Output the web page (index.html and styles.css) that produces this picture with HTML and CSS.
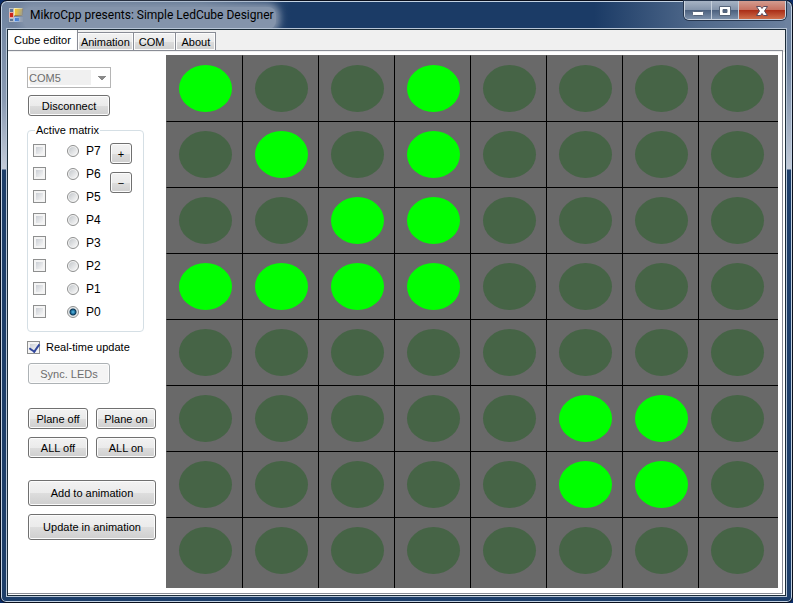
FILE: index.html
```html
<!DOCTYPE html>
<html lang="en">
<head>
<meta charset="utf-8">
<title>MikroCpp presents: Simple LedCube Designer</title>
<link rel="stylesheet" href="styles.css">
</head>
<body>
<div class="window">
  <header class="titlebar">
    <svg class="app-icon" viewBox="0 0 14 14" aria-hidden="true">
      <path fill="#b9bec6" d="M0 0h5v4H0zM0 10h5v4H0zM11 9h3v5h-3z"/>
      <path fill="#5f7390" d="M1 1h3v3H1zM1 11h3v2H1z"/>
      <rect x="5.500" y=".5" width="8" height="7" fill="#f8c62c" stroke="#fff0a8"/>
      <path d="M5.500 7.500h8v-7" fill="none" stroke="#b87a10"/>
      <rect x=".5" y="4.500" width="4" height="5" fill="#cf2418" stroke="#e7b0a8"/>
      <rect x="5.500" y="9.500" width="5" height="4" fill="#397be0" stroke="#a8c8f4"/>
    </svg>
    <h1 class="title">MikroCpp presents: Simple LedCube Designer</h1>
    <div class="caption">
      <button class="cap" type="button" aria-label="Minimize"><svg viewBox="0 0 14 12"><rect x="1.500" y="6.500" width="11" height="4" rx="1" fill="#fff" stroke="#56657a"/></svg></button>
      <button class="cap" type="button" aria-label="Maximize"><svg viewBox="0 0 14 12"><path fill="#fff" fill-rule="evenodd" stroke="#56657a" d="M1.500 1.500h11v9h-11zM5 4.500v3h4v-3z"/></svg></button>
      <button class="cap close" type="button" aria-label="Close"><svg viewBox="0 0 14 12"><path fill="#fff" stroke="#5b4b5c" d="M1.500 1.500h4L7 3.500l1.500-2h4L9.500 6l3 4.500h-4L7 8.500l-1.500 2h-4L4.500 6z"/></svg></button>
    </div>
  </header>
  <main class="client">
    <nav class="tabs">
      <button class="tab active" type="button">Cube editor</button>
      <button class="tab" type="button">Animation</button>
      <button class="tab com" type="button">COM</button>
      <button class="tab" type="button">About</button>
    </nav>
    <div class="page">
      <aside class="side">
        <select class="port" aria-label="Port" disabled><option>COM5</option></select>
        <button class="btn mid" type="button">Disconnect</button>
        <fieldset class="matrix">
          <legend>Active matrix</legend>
          <div class="planes" id="planes"></div>
          <div class="steps">
            <button class="btn step" type="button">+</button>
            <button class="btn step" type="button">−</button>
          </div>
        </fieldset>
        <label class="realtime"><input class="check" type="checkbox" checked>Real-time update</label>
        <button class="btn mid sync" type="button" disabled>Sync. LEDs</button>
        <div class="pairs">
          <button class="btn" type="button">Plane off</button>
          <button class="btn" type="button">Plane on</button>
          <button class="btn" type="button">ALL off</button>
          <button class="btn" type="button">ALL on</button>
        </div>
        <div class="anim">
          <button class="btn tall" type="button">Add to animation</button>
          <button class="btn tall" type="button">Update in animation</button>
        </div>
      </aside>
      <div class="leds" id="leds"></div>
    </div>
  </main>
</div>
<script src="app.js"></script>
</body>
</html>
```
FILE: styles.css
```css
* { box-sizing: border-box; }
body {
  margin: 0;
  background: #0b2c66;
  font: 11px/14px "Liberation Sans", Arial, sans-serif;
  color: #000;
}
button, select, input { font: inherit; color: inherit; margin: 0; }
.window {
  min-height: 100vh;
  display: flex;
  flex-direction: column;
  padding: 0 6px 6px;
  border: 1px solid #0a0f1c;
  border-radius: 7px 7px 6px 6px;
  box-shadow: inset 0 0 0 1px #c3d2e3;
  background:
    linear-gradient(#6d829f, #8a9bb3 100px, #c3cbd8 168px, transparent 169px) left / 7px 100% no-repeat,
    linear-gradient(#6d829f, #6d829f 60px, #c3cbd8 168px, transparent 169px) right / 7px 100% no-repeat,
    linear-gradient(90deg, #7385a0, #5f7592 200px, #1b3b66 290px, #1b3b66 75%, #50698b 88%, #6d829f) top / 100% 29px no-repeat,
    #1d3e69;
}
.titlebar { display: flex; height: 28px; padding-left: 2px; }
.app-icon { flex: none; width: 14px; height: 14px; margin-top: 7px; }
.title {
  margin: 6px auto 0 0;
  padding: 0 2px 0 7px;
  font: 12px/16px Roboto, "Open Sans", sans-serif;
  border-radius: 8px;
  background: #8494ab;
  box-shadow: 0 0 7px 4px #8494ab;
}
.caption {
  display: flex;
  height: 19px;
  border: 1px solid #cdd6e1;
  border-top: 0;
  border-radius: 0 0 5px 5px;
  box-shadow: 0 0 0 1px #26364e;
  overflow: hidden;
}
.cap {
  width: 27px;
  padding: 0;
  border: 0;
  border-right: 1px solid #c5cfdb;
  background: linear-gradient(#a6b3c4, #8393aa 50%, #4b607e 51%, #7c90aa);
}
.cap svg { width: 14px; height: 12px; display: block; margin: 2px auto 0; }
.close { width: 46px; border-right: 0; background: linear-gradient(#d49c90, #c6705f 50%, #a92c16 51%, #cf6f4c); }
.client {
  flex: 1;
  display: flex;
  flex-direction: column;
  padding-right: 2px;
  padding-bottom: 1px;
  border: 1px solid #1b2c38;
  box-shadow: 0 0 0 1px #b7c5d6;
  background: linear-gradient(#f0f0f0 22px, #fff 22px);
}
.tabs { display: flex; align-items: flex-end; height: 20px; }
.tab {
  height: 18px;
  padding: 0 3px;
  border: 1px solid #898c95;
  border-left-width: 0;
  border-bottom: 0;
  background: linear-gradient(#f2f2f2, #ebebeb 50%, #dddddd 51%, #d0d0d0);
  box-shadow: inset 0 0 0 1px #fcfcfc;
}
.com { padding: 0 11px 0 5px; }
.tab:last-child { padding: 0 5px; }
.tab.active { height: 20px; padding: 0 6px; border: 0; border-right: 1px solid #898c95; background: #fff; }
.page {
  flex: 1;
  display: flex;
  gap: 10px;
  padding: 4px 4px 5px 19px;
  border: 1px solid #898c95;
  border-left: 0;
}
.side { width: 129px; flex: none; display: flex; flex-direction: column; align-items: flex-start; padding-top: 12px; }
.port {
  appearance: none;
  width: 84px;
  height: 21px;
  padding: 0 1px;
  border: 1px solid #b5b5b5;
  border-radius: 0;
  opacity: 1;
  color: #6d6d6d;
  background:
    linear-gradient(45deg, transparent 50%, #8a8a8a 50%) right 8px center / 4px 4px no-repeat,
    linear-gradient(-45deg, transparent 50%, #8a8a8a 50%) right 4px center / 4px 4px no-repeat,
    linear-gradient(#f0f0f0, #f0f0f0) 2px 2px / 61px 15px no-repeat, #fff;
}
.btn {
  height: 21px;
  padding: 0;
  border: 1px solid #707070;
  border-radius: 3px;
  background: linear-gradient(#f2f2f2, #ebebeb 50%, #dddddd 51%, #cfcfcf);
  box-shadow: inset 0 0 0 1px #fcfcfc;
}
.mid { width: 82px; margin: 7px 0 0 1px; }
.btn:disabled { color: #6d6d6d; border-color: #adb2b5; background: #f4f4f4; }
.matrix {
  width: 117px;
  margin: 7px 0 0;
  padding: 2px 11px 8px 5px;
  border: 1px solid #d5dfe5;
  border-radius: 4px;
  display: flex;
  justify-content: space-between;
}
legend { padding: 0 1px; margin-left: 2px; }
.plane { display: flex; align-items: center; height: 23px; }
.plane label { display: flex; align-items: center; gap: 7px; margin-left: 21px; font-size: 12px; }
.check, .radio { appearance: none; width: 13px; height: 13px; flex: none; border: 1px solid #8e8f8f; }
.check {
  background: linear-gradient(135deg, #cbcfd5, #f6f6f6) content-box, #f4f4f4;
  padding: 2px;
}
.check:checked::before {
  content: "";
  display: block;
  width: 5px;
  height: 8px;
  margin: -2px 0 0 1px;
  border: solid #31479c;
  border-width: 0 2px 2px 0;
  transform: rotate(35deg);
}
.radio { width: 12px; height: 12px; border-radius: 50%; background: linear-gradient(135deg, #c4c8cc, #f8f8f8) content-box, #f4f4f4; padding: 1px; }
.radio:checked { background: radial-gradient(circle at 50% 50%, #5fc0e8 0, #1c6d9c 2px, #0d3450 3px, #e4e8ea 4px); }
.steps { display: flex; flex-direction: column; gap: 8px; padding-top: 4px; }
.step { width: 22px; }
.realtime { display: flex; align-items: center; gap: 6px; margin-top: 8px; }
.sync { margin-top: 9px; }
.pairs { display: grid; grid-template-columns: 60px 60px; gap: 8px; margin: 24px 0 0 1px; }
.anim { display: grid; gap: 8px; width: 128px; margin: 22px 0 0 1px; }
.tall { height: 26px; }
.leds {
  flex: 1;
  display: grid;
  grid-template-columns: repeat(7, 76fr) 80fr;
  grid-template-rows: repeat(7, 66fr) 71fr;
  background: #696969;
}
.led {
  display: flex;
  align-items: flex-start;
  min-width: 0;
  padding: 9px 0 0 12px;
  border: solid #000;
  border-width: 1px 0 0 1px;
  background: none;
}
.led::before { content: ""; width: 53px; height: 47px; border-radius: 50%; background: #466446; }
.led.on::before { background: #0f0; }
.led:nth-child(8n + 1) { border-left-color: #696969; }
.led:nth-child(-n + 8) { border-top-color: #696969; }
```
FILE: app.js
```js
const lit = ["10010000", "01010000", "00110000", "11110000", "00000000", "00000110", "00000110", "00000000"];

const leds = document.getElementById("leds");
lit.forEach((row, y) => [...row].forEach((v, x) => {
  const led = document.createElement("button");
  led.type = "button";
  led.className = v === "1" ? "led on" : "led";
  led.setAttribute("aria-label", `LED ${y + 1}, ${x + 1}`);
  led.addEventListener("click", () => led.classList.toggle("on"));
  leds.append(led);
}));

const planes = document.getElementById("planes");
for (let p = 7; p >= 0; p--) {
  planes.insertAdjacentHTML("beforeend", `<div class="plane">
    <input class="check" type="checkbox" aria-label="Select P${p}">
    <label><input class="radio" type="radio" name="plane"${p === 0 ? " checked" : ""}>P${p}</label>
  </div>`);
}
```
